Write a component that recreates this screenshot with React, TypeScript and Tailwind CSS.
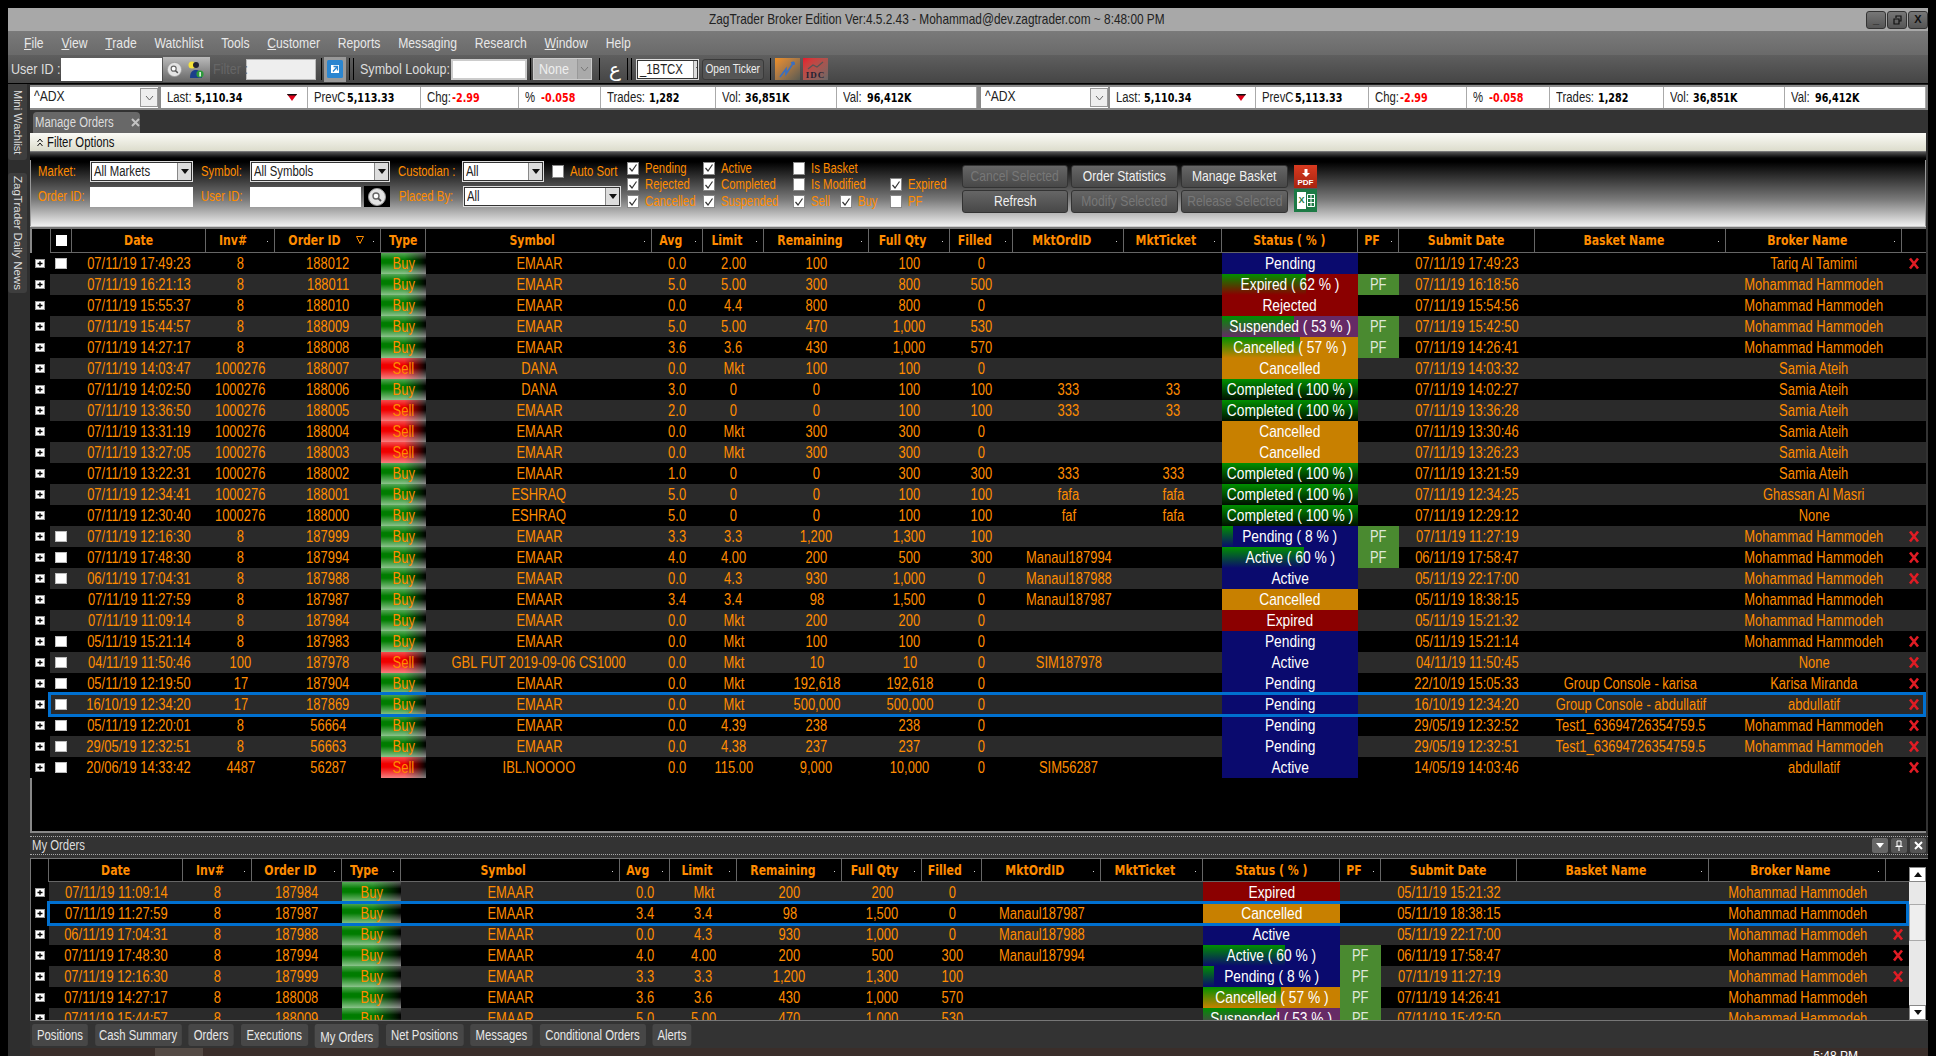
import React from "react";

const BASE = "[font-family:'Liberation_Sans',sans-serif]";
const WIDE = "[font-family:'DejaVu_Sans',sans-serif]";

const MH = "Mohammad Hammodeh";
const SA = "Samia Ateih";
const RAW = [
  `07/11/19 17:49:23|8|188012|Buy|EMAAR|0.0|2.00|100|100|0|||Pending|0|0|07/11/19 17:49:23||Tariq Al Tamimi|1|1`,
  `07/11/19 16:21:13|8|188011|Buy|EMAAR|5.0|5.00|300|800|500|||Expired|62|1|07/11/19 16:18:56||${MH}|0|0`,
  `07/11/19 15:55:37|8|188010|Buy|EMAAR|0.0|4.4|800|800|0|||Rejected|0|0|07/11/19 15:54:56||${MH}|0|0`,
  `07/11/19 15:44:57|8|188009|Buy|EMAAR|5.0|5.00|470|1,000|530|||Suspended|53|1|07/11/19 15:42:50||${MH}|0|0`,
  `07/11/19 14:27:17|8|188008|Buy|EMAAR|3.6|3.6|430|1,000|570|||Cancelled|57|1|07/11/19 14:26:41||${MH}|0|0`,
  `07/11/19 14:03:47|1000276|188007|Sell|DANA|0.0|Mkt|100|100|0|||Cancelled|0|0|07/11/19 14:03:32||${SA}|0|0`,
  `07/11/19 14:02:50|1000276|188006|Buy|DANA|3.0|0|0|100|100|333|33|Completed|100|0|07/11/19 14:02:27||${SA}|0|0`,
  `07/11/19 13:36:50|1000276|188005|Sell|EMAAR|2.0|0|0|100|100|333|33|Completed|100|0|07/11/19 13:36:28||${SA}|0|0`,
  `07/11/19 13:31:19|1000276|188004|Sell|EMAAR|0.0|Mkt|300|300|0|||Cancelled|0|0|07/11/19 13:30:46||${SA}|0|0`,
  `07/11/19 13:27:05|1000276|188003|Sell|EMAAR|0.0|Mkt|300|300|0|||Cancelled|0|0|07/11/19 13:26:23||${SA}|0|0`,
  `07/11/19 13:22:31|1000276|188002|Buy|EMAAR|1.0|0|0|300|300|333|333|Completed|100|0|07/11/19 13:21:59||${SA}|0|0`,
  `07/11/19 12:34:41|1000276|188001|Buy|ESHRAQ|5.0|0|0|100|100|fafa|fafa|Completed|100|0|07/11/19 12:34:25||Ghassan Al Masri|0|0`,
  `07/11/19 12:30:40|1000276|188000|Buy|ESHRAQ|5.0|0|0|100|100|faf|fafa|Completed|100|0|07/11/19 12:29:12||None|0|0`,
  `07/11/19 12:16:30|8|187999|Buy|EMAAR|3.3|3.3|1,200|1,300|100|||Pending|8|1|07/11/19 11:27:19||${MH}|1|1`,
  `07/11/19 17:48:30|8|187994|Buy|EMAAR|4.0|4.00|200|500|300|Manaul187994||Active|60|1|06/11/19 17:58:47||${MH}|1|1`,
  `06/11/19 17:04:31|8|187988|Buy|EMAAR|0.0|4.3|930|1,000|0|Manaul187988||Active|0|0|05/11/19 22:17:00||${MH}|1|1`,
  `07/11/19 11:27:59|8|187987|Buy|EMAAR|3.4|3.4|98|1,500|0|Manaul187987||Cancelled|0|0|05/11/19 18:38:15||${MH}|0|0`,
  `07/11/19 11:09:14|8|187984|Buy|EMAAR|0.0|Mkt|200|200|0|||Expired|0|0|05/11/19 15:21:32||${MH}|0|0`,
  `05/11/19 15:21:14|8|187983|Buy|EMAAR|0.0|Mkt|100|100|0|||Pending|0|0|05/11/19 15:21:14||${MH}|1|1`,
  `04/11/19 11:50:46|100|187978|Sell|GBL FUT 2019-09-06 CS1000|0.0|Mkt|10|10|0|SIM187978||Active|0|0|04/11/19 11:50:45||None|1|1`,
  `05/11/19 12:19:50|17|187904|Buy|EMAAR|0.0|Mkt|192,618|192,618|0|||Pending|0|0|22/10/19 15:05:33|Group Console - karisa|Karisa Miranda|1|1`,
  `16/10/19 12:34:20|17|187869|Buy|EMAAR|0.0|Mkt|500,000|500,000|0|||Pending|0|0|16/10/19 12:34:20|Group Console - abdullatif|abdullatif|1|1`,
  `05/11/19 12:20:01|8|56664|Buy|EMAAR|0.0|4.39|238|238|0|||Pending|0|0|29/05/19 12:32:52|Test1_63694726354759.5|${MH}|1|1`,
  `29/05/19 12:32:51|8|56663|Buy|EMAAR|0.0|4.38|237|237|0|||Pending|0|0|29/05/19 12:32:51|Test1_63694726354759.5|${MH}|1|1`,
  `20/06/19 14:33:42|4487|56287|Sell|IBL.NOOOO|0.0|115.00|9,000|10,000|0|SIM56287||Active|0|0|14/05/19 14:03:46||abdullatif|1|1`,
];
const ROWS = RAW.map((r) => r.split("|"));
const BOTTOM = [17, 16, 15, 14, 13, 4, 3].map((i) => ROWS[i]);

const TOP_GRID =
  "grid-cols-[20px_22px_134px_69px_106px_45px_226px_51px_61px_105px_81px_63px_111px_98px_136px_41px_136px_191px_176px_24px]";
const BOTTOM_GRID =
  "grid-cols-[19px_134px_69px_90px_59px_219px_50px_67px_105px_80px_60px_119px_102px_137px_41px_136px_192px_177px_24px]";

const HEADS: [string, boolean][] = [
  ["Date", false],
  ["Inv#", true],
  ["Order ID", true],
  ["Type", false],
  ["Symbol", true],
  ["Avg", true],
  ["Limit", true],
  ["Remaining", true],
  ["Full Qty", true],
  ["Filled", true],
  ["MktOrdID", true],
  ["MktTicket", true],
  ["Status ( % )", false],
  ["PF", true],
  ["Submit Date", false],
  ["Basket Name", true],
  ["Broker Name", true],
];

const STATUS_BG: Record<string, string> = {
  Pending: "bg-[#0a0a6e]",
  Active: "bg-[#0a0a6e]",
  Expired: "bg-[#8b0000]",
  Rejected: "bg-[#8b0000]",
  Cancelled: "bg-[#c88000]",
  Suspended: "bg-[#662a66]",
  Completed: "bg-[#001000]",
};

const BUY =
  "bg-[linear-gradient(180deg,rgba(255,255,255,.34),transparent_32%,transparent_48%,rgba(255,255,255,.55)),linear-gradient(90deg,#007c00_52%,#000_100%)]";
const SELL =
  "bg-[linear-gradient(180deg,rgba(255,255,255,.3),transparent_32%,transparent_48%,rgba(255,255,255,.5)),linear-gradient(90deg,#f00000_52%,#000_100%)]";

/* The reference's text is a narrow face: squeeze the regular one. T stays centred, L stays left-aligned. */
function T({ children, c = "" }: { children: React.ReactNode; c?: string }) {
  return <span className={`inline-block shrink-0 whitespace-nowrap scale-x-[0.81] ${c}`}>{children}</span>;
}
function L({ children, c = "" }: { children: React.ReactNode; c?: string }) {
  return <span className={`inline-block shrink-0 whitespace-nowrap origin-left scale-x-[0.81] ${c}`}>{children}</span>;
}

function Plus() {
  return (
    <svg width="10" height="9" viewBox="0 0 10 9" className="block">
      <rect x="0.5" y="0.5" width="9" height="8" fill="#fff" stroke="#999" />
      <path d="M2.5 4.5h5M5 2.2v4.6" stroke="#000" strokeWidth="1.4" />
    </svg>
  );
}
function Box() {
  return <div className="w-[12px] h-[11px] bg-white border border-[#bbb]" />;
}
function RedX() {
  return (
    <svg width="12" height="13" viewBox="0 0 12 13">
      <path d="M2 1.5l8 10M10 1.5l-8 10" stroke="#e01c24" strokeWidth="2.6" />
    </svg>
  );
}
function Mag({ s = 18 }: { s?: number }) {
  return (
    <svg width={s} height={s} viewBox="0 0 18 18">
      <circle cx="9" cy="9" r="8.5" fill="#e4e4e4" stroke="#999" />
      <circle cx="8" cy="8" r="3" fill="#fff" stroke="#666" strokeWidth="1.4" />
      <path d="M10 10.2l3 2.8" stroke="#555" strokeWidth="1.8" />
    </svg>
  );
}

function Check({ on = false }: { on?: boolean }) {
  return (
    <div className="w-[12px] h-[13px] bg-white border border-[#888] flex items-center justify-center shrink-0">
      {on && (
        <svg width="10" height="10" viewBox="0 0 10 10">
          <path d="M1.5 5l2.5 3L8.5 1.5" fill="none" stroke="#333" strokeWidth="1.2" />
        </svg>
      )}
    </div>
  );
}

function Head({ text, dot, sort = false }: { text: string; dot: boolean; sort?: boolean }) {
  return (
    <div
      className={`relative flex items-center justify-center border-r border-b border-[#666] text-[#ff8c00] text-[14px] font-bold ${WIDE} ${
        sort ? "pr-[26px]" : dot ? "pr-[13px]" : ""
      }`}
    >
      <span className="inline-block whitespace-nowrap shrink-0 scale-x-[0.78]">{text}</span>
      {sort && (
        <svg width="8" height="8" viewBox="0 0 8 8" className="absolute right-[16px] top-[7px]">
          <path d="M.5.5h7L4 7.500z" fill="none" stroke="#ff8c00" />
        </svg>
      )}
      {dot && <span className="absolute right-[6px] top-[12px] w-px h-px bg-[#ccc]" />}
    </div>
  );
}

function Row({
  r,
  alt,
  grid,
  withCheck,
  selected,
}: {
  r: string[];
  alt: boolean;
  grid: string;
  withCheck: boolean;
  selected: boolean;
}) {
  const [date, inv, id, type, sym, avg, lim, rem, full, filled, ord, tick, status, pct, pf, sub, basket, broker, x, chk] = r;
  const p = Number(pct);
  const cell = "flex items-center justify-center min-w-0";
  const bg = alt ? "bg-[#2a2a2a]" : "bg-black";
  return (
    <div className={`relative grid ${grid} h-[21px] text-[#ff8c00] text-[16px] leading-[21px]`}>
      <div className="flex items-center justify-center bg-black">
        <Plus />
      </div>
      {withCheck && <div className={`flex items-center justify-center ${bg}`}>{chk === "1" && <Box />}</div>}
      {[date, inv, id].map((t, i) => (
        <div key={i} className={`${cell} ${bg}`}>
          <T>{t}</T>
        </div>
      ))}
      <div className={`${cell} ${type === "Buy" ? BUY : SELL}`}>
        <T>{type}</T>
      </div>
      {[sym, avg, lim, rem, full, filled, ord, tick].map((t, i) => (
        <div key={i} className={`${cell} ${bg}`}>
          <T>{t}</T>
        </div>
      ))}
      <div className={`relative ${cell} text-white text-[17px] ${STATUS_BG[status]}`}>
        {p > 0 && (
          <div
            className="absolute left-0 inset-y-0 bg-linear-to-b from-[#009000] to-transparent"
            style={{ width: `${p}%` }}
          />
        )}
        <T c="relative">{p > 0 ? `${status} ( ${p} % )` : status}</T>
      </div>
      <div className={`${cell} ${pf === "1" ? "bg-[#4a8a30] text-[#dfe8d8]" : bg}`}>{pf === "1" && <T>PF</T>}</div>
      <div className={`${cell} ${bg}`}>
        <T>{sub}</T>
      </div>
      <div className={`${cell} ${bg}`}>
        <T>{basket}</T>
      </div>
      <div className={`${cell} ${bg}`}>
        <T>{broker}</T>
      </div>
      <div className={`${cell} ${bg}`}>{x === "1" && <RedX />}</div>
      {selected && (
        <div
          className={`absolute z-10 -inset-y-[2px] right-0 border-[3px] border-[#0070d0] pointer-events-none ${
            withCheck ? "left-[18px]" : "left-[17px]"
          }`}
        />
      )}
    </div>
  );
}

function Select({ w, label, h = "h-[21px]" }: { w: string; label: string; h?: string }) {
  return (
    <div
      className={`${w} ${h} bg-white border-2 border-[#ddd] outline outline-1 -outline-offset-2 outline-[#333] flex items-center justify-between text-[#222] text-[14px] pl-[2px] shrink-0 overflow-hidden`}
    >
      <L>{label}</L>
      <span className="w-[14px] h-full bg-[#ddd] border-l border-[#888] flex items-center justify-center shrink-0">
        <svg width="8" height="5" viewBox="0 0 8 5">
          <path d="M0 0h8L4 5z" fill="#111" />
        </svg>
      </span>
    </div>
  );
}

function Combo({ w }: { w: string }) {
  return (
    <div className={`${w} h-[21px] bg-white flex items-center justify-between text-[#222] text-[15px] pl-[4px] shrink-0`}>
      <L c="-mt-[3px]">^ADX</L>
      <span className="w-[18px] h-[19px] bg-[#eee] border border-[#999] flex items-center justify-center">
        <svg width="9" height="6" viewBox="0 0 9 6">
          <path d="M1 1l3.5 4L8 1" fill="none" stroke="#666" />
        </svg>
      </span>
    </div>
  );
}

function Cell({ w, children }: { w: string; children: React.ReactNode }) {
  return (
    <div className={`${w} h-[21px] bg-white border-r border-[#aaa] flex items-center shrink-0 overflow-hidden text-[#222] text-[14px] pl-[6px]`}>
      {children}
    </div>
  );
}
const Lab = ({ w, children }: { w: string; children: React.ReactNode }) => (
  <span className={`${w} shrink-0 inline-block whitespace-nowrap origin-left scale-x-[0.81]`}>{children}</span>
);
const Val = ({ c = "text-black", w = "w-[50px]", children }: { c?: string; w?: string; children: React.ReactNode }) => (
  <span className={`${WIDE} ${w} shrink-0 inline-block whitespace-nowrap origin-left scale-x-[0.8] font-bold text-[12px] ${c}`}>{children}</span>
);

function TickerGroup({ w, lastW, pw, cw, ppw, tw, vw, valW }: Record<string, string>) {
  return (
    <div className={`${w} flex items-center shrink-0`}>
      <Cell w={lastW}>
        <Lab w="w-[28px]">Last:</Lab>
        <Val>5,110.34</Val>
        <svg width="10" height="7" viewBox="0 0 10 7" className="ml-[42px]">
          <path d="M0 0h10L5 7z" fill="#e0001a" />
          <path d="M0 0h10l-1 1.6H1z" fill="#111" />
        </svg>
      </Cell>
      <Cell w={pw}>
        <Lab w="w-[33px]">PrevC</Lab>
        <Val>5,113.33</Val>
      </Cell>
      <Cell w={cw}>
        <Lab w="w-[25px]">Chg:</Lab>
        <Val c="text-[#f00]">-2.99</Val>
      </Cell>
      <Cell w={ppw}>
        <Lab w="w-[16px]">%</Lab>
        <Val c="text-[#f00]">-0.058</Val>
      </Cell>
      <Cell w={tw}>
        <Lab w="w-[42px]">Trades:</Lab>
        <Val>1,282</Val>
      </Cell>
      <Cell w={vw}>
        <Lab w="w-[23px]">Vol:</Lab>
        <Val>36,851K</Val>
      </Cell>
      <Cell w={valW}>
        <Lab w="w-[24px]">Val:</Lab>
        <Val>96,412K</Val>
      </Cell>
    </div>
  );
}

function Btn({ label, off = false }: { label: string; off?: boolean }) {
  return (
    <div
      className={`h-[23px] rounded-[3px] border border-[#333] bg-linear-to-b from-[#666] to-[#484848] flex items-center justify-center text-[15px] ${
        off ? "text-[#777]" : "text-[#f0f0f0]"
      }`}
    >
      <T>{label}</T>
    </div>
  );
}

function ChkL({ on, label, span = "" }: { on?: boolean; label: string; span?: string }) {
  return (
    <div className={`flex items-center gap-[6px] text-[#ff8c00] text-[14px] ${span}`}>
      <Check on={on} />
      <L>{label}</L>
    </div>
  );
}

const Sep = ({ m }: { m: string }) => <div className={`w-px h-[22px] bg-black shrink-0 ${m}`} />;

const MENU: [string, string][] = [
  ["F", "ile"],
  ["V", "iew"],
  ["T", "rade"],
  ["", "Watchlist"],
  ["", "Tools"],
  ["C", "ustomer"],
  ["", "Reports"],
  ["", "Messaging"],
  ["", "Research"],
  ["W", "indow"],
  ["", "Help"],
];
const TABS = ["Positions", "Cash Summary", "Orders", "Executions", "My Orders", "Net Positions", "Messages", "Conditional Orders", "Alerts"];
const TAB_W = ["w-[69px]", "w-[107px]", "w-[56px]", "w-[83px]", "w-[79px]", "w-[96px]", "w-[77px]", "w-[131px]", "w-[48px]"];

export default function App() {
  return (
    <div className={`w-screen h-screen bg-black pt-2 px-2 overflow-hidden ${BASE}`}>
      {/* title */}
      <div className="h-[23px] bg-[#a8a8a8] flex items-center text-[#222] text-[15px]">
        <span className="ml-[701px] w-[580px] shrink-0 whitespace-nowrap origin-left scale-x-[0.79]">
          ZagTrader Broker Edition Ver:4.5.2.43 - Mohammad@dev.zagtrader.com ~ 8:48:00 PM
        </span>
        <div className="ml-auto flex gap-px items-center">
          {["_", "", "X"].map((t, i) => (
            <div
              key={i}
              className="w-[20px] h-[18px] bg-linear-to-b from-[#777] to-[#555] rounded-[3px] border border-[#333] flex items-center justify-center text-[#111] text-[11px] font-bold leading-none"
            >
              {i === 1 ? (
                <svg width="9" height="10" viewBox="0 0 9 10">
                  <path d="M3 3V1h5v5H6M1 4h5v5H1z" fill="none" stroke="#111" strokeWidth="1.2" />
                </svg>
              ) : (
                t
              )}
            </div>
          ))}
        </div>
      </div>
      {/* menu */}
      <div className="h-[24px] bg-linear-to-b from-[#7a7a7a] to-[#6a6a6a] pl-[16px] overflow-hidden">
        <div className="h-full w-[1500px] origin-left scale-x-[0.81] flex items-center gap-[22px] text-[#e8e8e8] text-[15px]">
          {MENU.map(([u, rest], i) => (
            <span key={i}>
              {u && <u>{u}</u>}
              {rest}
            </span>
          ))}
        </div>
      </div>
      {/* toolbar */}
      <div className="h-[29px] bg-linear-to-b from-[#5f5f5f] to-[#454545] border-b border-black flex items-center text-[#ddd] text-[15.5px]">
        <Lab w="ml-[3px] w-[50px]">User ID :</Lab>
        <div className="w-[101px] h-[23px] bg-white shrink-0" />
        <div className="ml-px w-[47px] h-[25px] bg-linear-to-b from-[#bbb] to-[#666] flex items-center gap-[6px] pl-[4px] shrink-0">
          <Mag s={15} />
          <svg width="16" height="19" viewBox="0 0 16 19">
            <circle cx="4" cy="5" r="3.5" fill="#f6e23a" />
            <circle cx="8" cy="5" r="3" fill="#223" />
            <path d="M2 18c0-7 3-8 6-8s6 2 6 8z" fill="#1c3f8a" />
            <circle cx="12" cy="14" r="3.6" fill="#2c9a3a" />
            <rect x="11.4" y="12" width="1.4" height="4.4" fill="#fff" />
          </svg>
        </div>
        <span className="ml-[3px] w-[33px] text-[#666] shrink-0 whitespace-nowrap origin-left scale-x-[0.81]">Filter :</span>
        <div className="w-[70px] h-[21px] bg-[#eee] border border-[#bbb] shrink-0" />
        <Sep m="ml-[5px]" />
        <div className="ml-[2px] w-[22px] h-[25px] bg-[#999] flex items-center justify-center shrink-0">
          <svg width="16" height="18" viewBox="0 0 16 18">
            <rect width="16" height="18" rx="1.5" fill="#2a85d0" />
            <rect x="4" y="5" width="8" height="8" fill="#fff" />
            <path d="M6.5 6.5h4v4M10.5 6.5l-4.5 5" stroke="#2a85d0" strokeWidth="1.3" fill="none" />
          </svg>
        </div>
        <Sep m="ml-[3px]" />
        <Sep m="ml-[3px]" />
        <Lab w="ml-[6px] w-[91px]">Symbol Lookup:</Lab>
        <div className="w-[76px] h-[21px] bg-white border-2 border-[#ccc] shrink-0" />
        <Sep m="ml-[3px]" />
        <div className="ml-[2px] w-[59px] h-[22px] bg-[#b8b8b8] border border-[#ccc] flex items-center justify-between pl-[5px] text-[#eee] shrink-0">
          <L>None</L>
          <span className="w-[14px] h-full bg-[#aaa] border-l border-[#999] flex items-center justify-center">
            <svg width="9" height="6" viewBox="0 0 9 6">
              <path d="M1 1l3.5 4L8 1" fill="none" stroke="#777" />
            </svg>
          </span>
        </div>
        <Sep m="ml-[7px]" />
        <span className="ml-[9px] w-[16px] text-[20px] leading-none text-white shrink-0 [font-family:'DejaVu_Sans',sans-serif]">ع</span>
        <Sep m="ml-[2px]" />
        <Sep m="ml-[3px]" />
        <div className="ml-[4px]">
          <Select w="w-[63px]" label="_1BTCX" />
        </div>
        <div className="ml-[3px] w-[62px] h-[21px] rounded-[3px] bg-[#555] border border-[#3a3a3a] flex items-center justify-center text-[#eee] text-[12.5px] shrink-0">
          <T>Open Ticker</T>
        </div>
        <Sep m="ml-[6px]" />
        <div className="ml-[4px] w-[25px] h-[22px] bg-linear-to-br from-[#f09020] to-[#5a5a50] flex items-center justify-center shrink-0">
          <svg width="20" height="18" viewBox="0 0 20 18">
            <path d="M2 17l6-8v5l8-12M16 2l-3 1M16 2v3" fill="none" stroke="#3a6fc0" strokeWidth="1.6" />
          </svg>
        </div>
        <div className="ml-[3px] w-[25px] h-[22px] bg-linear-to-br from-[#e8102a] to-[#666] flex flex-col items-center justify-end shrink-0">
          <svg width="20" height="9" viewBox="0 0 20 9">
            <path d="M2 8l5-4 4 2 6-5" fill="none" stroke="#555" strokeWidth="1.2" />
          </svg>
          <span className="text-[9px] leading-[10px] font-bold tracking-[1px] text-[#223] [font-family:'Liberation_Serif',serif]">IDC</span>
        </div>
      </div>
      {/* body */}
      <div className="flex h-[972px]">
        <div className="w-[22px] shrink-0 bg-[#2e2e2e] flex flex-col gap-[13px]">
          <div className="w-[19px] h-[76px] bg-[#3e3e3e] rounded-b-[3px] flex items-center justify-center text-[#ddd] text-[11px] [writing-mode:vertical-rl]">
            Mini Wachlist
          </div>
          <div className="w-[19px] h-[120px] bg-[#3e3e3e] rounded-[3px] flex items-center justify-center text-[#ddd] text-[11.5px] whitespace-nowrap [writing-mode:vertical-rl]">
            ZagTrader Daily News
          </div>
        </div>
        <div className="flex-1 min-w-0 flex flex-col bg-[#333]">
          {/* ticker */}
          <div className="h-[26px] bg-[#8a8a8a] border-t border-[#222] flex items-start pt-[1px]">
            <div className="flex items-center pt-px">
              <Combo w="w-[128px]" />
              <div className="w-[3px]" />
              <TickerGroup w="w-[816px]" lastW="w-[147px]" pw="w-[113px]" cw="w-[98px]" ppw="w-[82px]" tw="w-[115px]" vw="w-[121px]" valW="w-[140px]" />
              <div className="w-[4px]" />
              <Combo w="w-[127px]" />
              <div className="w-[2px]" />
              <TickerGroup w="w-[816px]" lastW="w-[146px]" pw="w-[113px]" cw="w-[98px]" ppw="w-[83px]" tw="w-[114px]" vw="w-[121px]" valW="w-[141px]" />
            </div>
          </div>
          {/* tab strip */}
          <div className="h-[23px] flex items-end pl-[3px]">
            <div className="w-[107px] h-[21px] bg-[#686868] rounded-t-[4px] flex items-center pl-[2px] text-[#ddd] text-[14px]">
              <L>Manage Orders</L>
              <svg width="9" height="9" viewBox="0 0 9 9" className="-ml-[1px] shrink-0">
                <path d="M1 1l7 7M8 1L1 8" stroke="#c4c4c4" strokeWidth="2" />
              </svg>
            </div>
          </div>
          {/* filter bar */}
          <div className="h-[19px] mr-[2px] bg-linear-to-b from-[#fbfbf6] to-[#dcdccc] border-b border-[#777] flex items-center pl-[7px] gap-[4px] text-[#111] text-[14px]">
            <svg width="6" height="9" viewBox="0 0 6 9">
              <path d="M.5 4L3 1l2.500 3M.5 8L3 5l2.500 3" fill="none" stroke="#111" />
            </svg>
            <L>Filter Options</L>
          </div>
          <div className="h-[8px] mr-[2px] bg-linear-to-b from-[#555] to-black" />
          {/* filter panel */}
          <div className="h-[66px] mr-[2px] flex bg-[linear-gradient(180deg,#000_3%,#7a7a7a_60%,#f0f0f0_100%)] border-x border-[#999]">
            <div className="ml-[7px] w-[582px] shrink-0">
              <div className="mt-px h-[21px] flex items-center text-[#ff8c00] text-[14px]">
                <Lab w="w-[52px]">Market:</Lab>
                <Select w="w-[103px]" label="All Markets" />
                <Lab w="ml-[8px] w-[49px]">Symbol:</Lab>
                <Select w="w-[140px]" label="All Symbols" />
                <Lab w="ml-[8px] w-[64px]">Custodian :</Lab>
                <Select w="w-[82px]" label="All" />
                <div className="ml-[8px]">
                  <Check />
                </div>
                <L c="ml-[6px]">Auto Sort</L>
              </div>
              <div className="mt-[4px] h-[21px] flex items-center text-[#ff8c00] text-[14px]">
                <Lab w="w-[52px]">Order ID:</Lab>
                <div className="w-[103px] h-[20px] bg-white shrink-0" />
                <Lab w="ml-[8px] w-[49px]">User ID:</Lab>
                <div className="w-[111px] h-[20px] bg-white shrink-0" />
                <div className="ml-[3px] w-[26px] h-[21px] bg-black flex items-center justify-center shrink-0">
                  <Mag />
                </div>
                <Lab w="ml-[9px] w-[64px]">Placed By:</Lab>
                <Select w="w-[158px]" label="All" />
              </div>
            </div>
            <div className="ml-[7px] w-[335px] shrink-0 grid grid-cols-[76px_90px_47px_50px_72px] grid-rows-[16px_17px_17px]">
              <ChkL on label="Pending" />
              <ChkL on label="Active" />
              <ChkL label="Is Basket" span="col-span-2" />
              <div />
              <ChkL on label="Rejected" />
              <ChkL on label="Completed" />
              <ChkL label="Is Modified" span="col-span-2" />
              <ChkL on label="Expired" />
              <ChkL on label="Cancelled" />
              <ChkL on label="Suspended" />
              <ChkL on label="Sell" />
              <ChkL on label="Buy" />
              <ChkL label="PF" />
            </div>
            <div className="pt-[5px] w-[326px] shrink-0 grid grid-cols-[106px_107px_107px] gap-x-[3px] gap-y-[2px] content-start">
              <Btn label="Cancel Selected" off />
              <Btn label="Order Statistics" />
              <Btn label="Manage Basket" />
              <Btn label="Refresh" />
              <Btn label="Modify Selected" off />
              <Btn label="Release Selected" off />
            </div>
            <div className="ml-[6px] pt-[5px] w-[23px] flex flex-col gap-px">
              <div className="h-[23px] bg-linear-to-b from-[#d83a20] to-[#a82410] flex flex-col items-center justify-end">
                <svg width="10" height="10" viewBox="0 0 10 10">
                  <path d="M3.500 1h3v4H9L5 9 1 5h2.500z" fill="#fff" />
                </svg>
                <span className="text-[8px] leading-[10px] font-bold text-white">PDF</span>
              </div>
              <div className="h-[23px] bg-[#1d7a45] flex items-center pl-[3px] gap-px">
                <div className="w-[9px] h-[17px] bg-white flex items-center justify-center text-[#1d7a45] text-[9px] font-bold leading-none">X</div>
                <svg width="8" height="13" viewBox="0 0 8 13">
                  <path d="M.5.5h7v12h-7zM4 .5v12M.5 4.500h7M.5 8.500h7" fill="none" stroke="#fff" />
                </svg>
              </div>
            </div>
          </div>
          <div className="h-[3px] mr-[2px] bg-[#777] border-t border-[#ccc]" />
          {/* top table */}
          <div className="h-[604px] mr-[2px] bg-black border-l-2 border-b-2 border-[#888]">
            <div className={`grid ${TOP_GRID} h-[24px] -ml-[2px]`}>
              <div />
              <div className="border-l border-r border-b border-[#666] flex items-center justify-center">
                <div className="w-[11px] h-[11px] bg-white" />
              </div>
              {HEADS.map(([t, d]) => (
                <Head key={t} text={t} dot={d} sort={t === "Order ID"} />
              ))}
              <div className="border-b border-[#666]" />
            </div>
            <div className="-ml-[2px]">
              {ROWS.map((r, i) => (
                <Row key={i} r={r} alt={i % 2 === 1} grid={TOP_GRID} withCheck selected={i === 21} />
              ))}
            </div>
          </div>
          {/* my orders bar */}
          <div className="mt-[3px] h-[19px] border-y border-dotted border-[#aaa] flex items-center pl-[2px] text-[#ddd] text-[14px]">
            <L>My Orders</L>
            <div className="ml-auto mr-[2px] flex gap-[3px]">
              <div className="w-[16px] h-[15px] bg-[#666] rounded-[2px] flex items-center justify-center">
                <svg width="8" height="5" viewBox="0 0 8 5">
                  <path d="M0 0h8L4 5z" fill="#fff" />
                </svg>
              </div>
              <div className="w-[16px] h-[15px] bg-[#555] rounded-[2px] flex items-center justify-center">
                <svg width="8" height="11" viewBox="0 0 8 11">
                  <path d="M2 1h4v5H2zM0.500 6.500h7M4 6.500V11" fill="none" stroke="#fff" />
                </svg>
              </div>
              <div className="w-[16px] h-[15px] bg-[#555] rounded-[2px] flex items-center justify-center">
                <svg width="9" height="9" viewBox="0 0 9 9">
                  <path d="M1 1l7 7M8 1L1 8" stroke="#fff" strokeWidth="2" />
                </svg>
              </div>
            </div>
          </div>
          {/* bottom table */}
          <div className="mt-[3px] h-[163px] bg-black border-y border-l border-[#777] flex overflow-hidden">
            <div className="w-[1879px] shrink-0 overflow-hidden -ml-px">
              <div className={`grid ${BOTTOM_GRID} h-[23px]`}>
                <div className="border-r border-[#666]" />
                {HEADS.map(([t, d]) => (
                  <Head key={t} text={t} dot={d || t === "Type"} />
                ))}
                <div className="border-b border-[#666]" />
              </div>
              {BOTTOM.map((r, i) => (
                <Row key={i} r={r} alt={i % 2 === 0} grid={BOTTOM_GRID} withCheck={false} selected={i === 1} />
              ))}
            </div>
            <div className="w-[17px] bg-[#e8e8e8] flex flex-col shrink-0">
              <div className="h-[8px] bg-black" />
              <div className="h-[15px] bg-white border border-[#888] flex items-center justify-center">
                <svg width="8" height="5" viewBox="0 0 8 5">
                  <path d="M0 5h8L4 0z" fill="#111" />
                </svg>
              </div>
              <div className="mt-[22px] h-[37px] bg-[#eee] border border-[#aaa]" />
              <div className="mt-auto h-[15px] bg-white border border-[#888] flex items-center justify-center">
                <svg width="8" height="5" viewBox="0 0 8 5">
                  <path d="M0 0h8L4 5z" fill="#111" />
                </svg>
              </div>
            </div>
          </div>
          {/* tabs: the strip is drawn wide and squeezed like the text in it */}
          <div className="h-[27px] bg-[#333] overflow-hidden pl-[2px]">
            <div className="w-[1200px] h-full origin-left scale-x-[0.81] flex items-start gap-[8.5px] pt-[3px]">
              {TABS.map((t, i) => (
                <div
                  key={t}
                  className={`${TAB_W[i]} shrink-0 rounded-[3px] flex items-center justify-center whitespace-nowrap text-[14px] text-[#e8e8e8] ${
                    t === "My Orders" ? "h-[24px] bg-[#4c4c4c] pt-[3px]" : "h-[22px] bg-[#474747]"
                  }`}
                >
                  {t}
                </div>
              ))}
            </div>
          </div>
          {/* bottom strip */}
          <div className="h-[8px] bg-[#3a2e2a] flex text-white text-[12px] leading-[12px]">
            <div className="ml-[125px] w-[48px] h-full bg-[#544a44]" />
            <span className="ml-auto mr-[70px] h-[8px] overflow-hidden pt-[2px]">5:48 PM</span>
          </div>
        </div>
      </div>
    </div>
  );
}
